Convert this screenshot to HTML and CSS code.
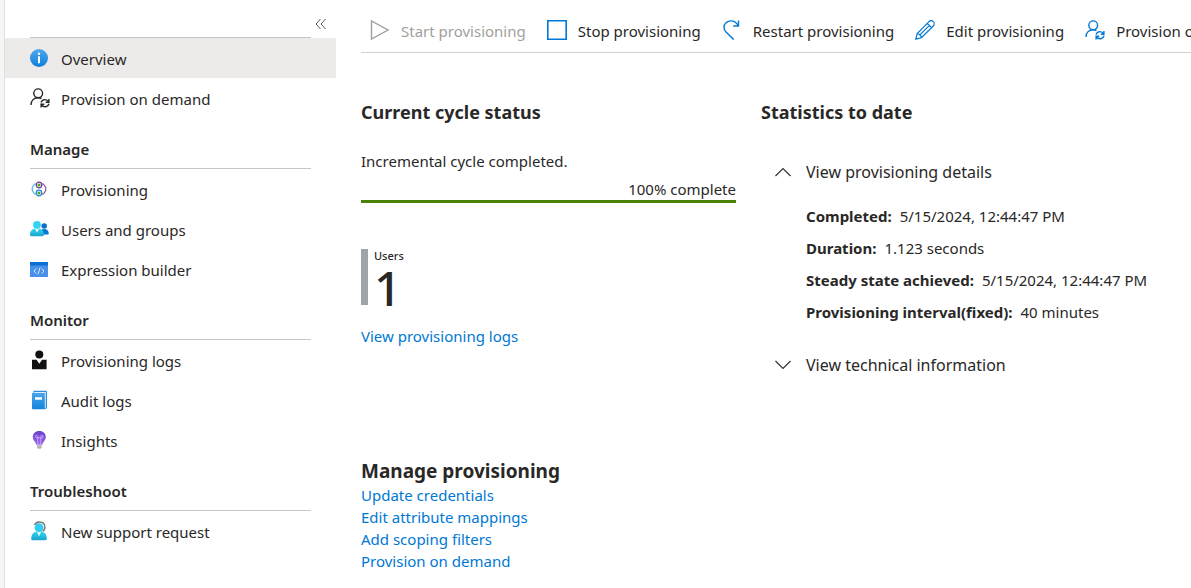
FILE: index.html
```html
<!DOCTYPE html>
<html lang="en">
<head>
    <meta charset="UTF-8">
    <meta name="viewport" content="width=device-width, initial-scale=1.0">
    <title>Provisioning - Overview</title>
    <link rel="stylesheet" href="styles.css">
</head>
<body>
    <!-- shared icon: person with sync arrows -->
    <svg class="defs" aria-hidden="true">
        <symbol id="person-sync" viewBox="0 0 20 20">
            <g fill="none" stroke="currentColor" stroke-width="1.4">
                <circle cx="8.2" cy="5.3" r="4.4"/>
                <path d="M1 17c0-4.600 3-7.300 7.200-7.300 1.300 0 2.300.3 3.300.8"/>
                <path d="M11 14.600c.7-2 2.200-3 4-3 1.500 0 2.800.8 3.500 2.200M18.900 11v3.200h-3.200M19 15.800c-.7 2-2.200 3-4 3-1.500 0-2.800-.8-3.500-2.200M11.100 19.500v-3.200h3.200"/>
            </g>
        </symbol>
    </svg>
    <div class="page">
        <nav class="sidebar">
            <div class="sidebar-top">
                <div class="search-line"></div>
                <button type="button" class="collapse" aria-label="Collapse menu">
                    <svg width="12" height="12" viewBox="0 0 12 12"><path d="M5.500 1 1 6l4.500 5M10.500 1 6 6l4.500 5" fill="none" stroke="#605e5c"/></svg>
                </button>
            </div>
            <a href="#" class="item active">
                <svg width="18" height="18" viewBox="0 0 18 18">
                    <defs><linearGradient id="gInfo" x2="0" y2="1"><stop offset="0" stop-color="#4fa8f0"/><stop offset="1" stop-color="#0f7fd8"/></linearGradient></defs>
                    <circle cx="9" cy="9" r="9" fill="url(#gInfo)"/>
                    <circle cx="9" cy="4.800" r="1.200" fill="#fff"/><path d="M8 7.200h2v7H8z" fill="#fff"/>
                </svg>
                Overview
            </a>
            <a href="#" class="item">
                <svg width="20" height="20"><use href="#person-sync"/></svg>
                Provision on demand
            </a>

            <h2 class="group">Manage</h2>
            <a href="#" class="item">
                <svg width="18" height="18" viewBox="0 0 18 18">
                    <g fill="none" stroke-width="1.200">
                        <path d="M6 4H4.600L2.300 7.500v3L4.500 14H6" stroke="#50b7e8"/>
                        <path d="M12 4h1.300l2.400 3.500v3L13.500 14H12" stroke="#8a4f9e"/>
                        <circle cx="9" cy="5" r="2.800" stroke="#6b3a94"/>
                        <circle cx="9" cy="13" r="2.800" stroke="#1b86d8"/>
                    </g>
                    <circle cx="9" cy="5" r="1.600" fill="#5ea11a"/><circle cx="9" cy="13" r="1.600" fill="#5ea11a"/>
                </svg>
                Provisioning
            </a>
            <a href="#" class="item">
                <svg width="20" height="18" viewBox="0 0 20 18">
                    <defs><linearGradient id="gUser" x2="0" y2="1"><stop offset="0" stop-color="#32d4f5"/><stop offset="1" stop-color="#1aa5cb"/></linearGradient></defs>
                    <circle cx="14.200" cy="6" r="2.800" fill="#0f6fc9"/><path d="M10 14.500c0-3.500 1.500-5.500 4.200-5.500s4.600 2 4.600 4.600q0 .9-.9.900z" fill="#0078d4"/>
                    <path d="M0 15c0-4 2.300-6.800 7-6.800s6.900 2.800 6.900 6.800q0 1.300-1.300 1.300H1.300Q0 16.300 0 15z" fill="url(#gUser)"/>
                    <path d="m4.800 8.500 2.200 4.200 2.200-4.200z" fill="#e6f9fd"/>
                    <circle cx="7" cy="4.800" r="3.900" fill="#35d3f2"/>
                </svg>
                Users and groups
            </a>
            <a href="#" class="item">
                <svg width="18" height="18" viewBox="0 0 18 18">
                    <path d="M0 5h18v12H0z" fill="#4a90ea"/><path d="M0 2h18v3.500H0z" fill="#0b6fd0"/>
                    <path d="M6.300 8.500 4 11l2.300 2.500M11.700 8.500 14 11l-2.300 2.500M10 7.700 8 14.300" fill="none" stroke="#d5e8ff"/>
                </svg>
                Expression builder
            </a>

            <h2 class="group">Monitor</h2>
            <a href="#" class="item">
                <svg width="18" height="20" viewBox="0 0 18 20">
                    <circle cx="9.300" cy="4.500" r="4" fill="#111"/>
                    <path d="M2 9.800h4.500l2.800 4 2.800-4h4.500v9.500H2z" fill="#111"/>
                </svg>
                Provisioning logs
            </a>
            <a href="#" class="item">
                <svg width="18" height="20" viewBox="0 0 18 20">
                    <defs><linearGradient id="gBook" x2="0" y2="1"><stop offset="0" stop-color="#4ba5ee"/><stop offset="1" stop-color="#1584dc"/></linearGradient></defs>
                    <path d="M3.500.8H16q1 0 1 1v16q0 1-1 1H3.500z" fill="#2b8bdd"/><path d="M4 2h11.800v16H14z" fill="#e3f0fa"/>
                    <path d="M2 2.500Q2 3 3 3h11.800v16.200H3q-1 0-1-1z" fill="url(#gBook)"/>
                    <path d="M5 7.200h7v2.500H5z" fill="#fff"/>
                </svg>
                Audit logs
            </a>
            <a href="#" class="item">
                <svg width="18" height="20" viewBox="0 0 18 20">
                    <defs><linearGradient id="gBulb" x2="0" y2="1"><stop offset="0" stop-color="#6741c9"/><stop offset="1" stop-color="#9a66ef"/></linearGradient></defs>
                    <path d="M9.300 1c3.900 0 6.500 2.600 6.500 6 0 3.700-3 4.600-3.400 7.800H6.200C5.800 11.600 2.800 10.700 2.800 7c0-3.400 2.600-6 6.500-6z" fill="url(#gBulb)"/>
                    <path d="M7.800 14.500V7.800H6.500A1.200 1.200 0 1 1 7.800 6.600v1.200h3V6.600A1.200 1.200 0 1 1 12 7.800h-1.200v6.700" fill="none" stroke="#d9b8ff" stroke-width=".8"/>
                    <path d="M6.800 15.300h5v1.800l-1 1.600h-3l-1-1.600z" fill="#b3b3b3"/>
                </svg>
                Insights
            </a>

            <h2 class="group">Troubleshoot</h2>
            <a href="#" class="item">
                <svg width="18" height="20" viewBox="0 0 18 20">
                    <path d="M4.500 4C5.500 1.800 7.300 1 9.300 1c3.500 0 5.600 2.200 5.600 5.300 0 2.200-.8 3.400-2.300 4" fill="none" stroke="#767676" stroke-width="1.400"/>
                    <path d="M1.200 17.800c0-4.500 2.400-7.500 7.800-7.500s7.800 3 7.800 7.500q0 1.500-1.500 1.500H2.700q-1.500 0-1.500-1.500z" fill="url(#gUser)"/>
                    <path d="m6.700 10.500 2.300 5 2.300-5z" fill="#e0f8fd"/>
                    <circle cx="9" cy="6.700" r="4.400" fill="#32cdf0"/>
                </svg>
                New support request
            </a>
        </nav>

        <main class="content">
            <div class="toolbar">
                <button type="button" class="tool" disabled>
                    <svg width="20" height="20" viewBox="0 0 20 20"><path d="M1.500 1v18L18 10z" fill="none" stroke="#a19f9d" stroke-width="1.400"/></svg>
                    Start provisioning
                </button>
                <button type="button" class="tool">
                    <svg width="20" height="20" viewBox="0 0 20 20"><path d="M.8.8h18.400v18.400H.8z" fill="none" stroke="#0078d4" stroke-width="1.600"/></svg>
                    Stop provisioning
                </button>
                <button type="button" class="tool">
                    <svg width="20" height="20" viewBox="0 0 20 20"><path d="M16.500.5V6h-5.300M16.200 5.800C14.500 2.500 11.900.9 9 .9 5 .9 2 3.700 2 7.300c0 2 .8 3.500 2 4.700l7.700 7.600" fill="none" stroke="#0078d4" stroke-width="1.400"/></svg>
                    Restart provisioning
                </button>
                <button type="button" class="tool">
                    <svg width="20" height="20" viewBox="0 0 20 20"><path d="M.8 19.200 2.200 13.600 14 1.700a3 3 0 0 1 4.300 4.300L6.400 17.800zM2.300 13.700c2.200.3 3.600 1.700 4 4M12.300 3.500 16.500 7.700M14.200 5.600 4.400 15.400" fill="none" stroke="#0078d4" stroke-width="1.200"/></svg>
                    Edit provisioning
                </button>
                <button type="button" class="tool">
                    <svg class="blue" width="20" height="20"><use href="#person-sync"/></svg>
                    Provision on demand
                </button>
            </div>

            <div class="columns">
                <section class="cycle">
                    <h2>Current cycle status</h2>
                    <p class="state">Incremental cycle completed.</p>
                    <div class="progress">100% complete</div>
                    <div class="users">
                        <span class="users-label">Users</span>
                        <span class="users-count">1</span>
                    </div>
                    <a href="#">View provisioning logs</a>
                </section>

                <section class="stats">
                    <h2>Statistics to date</h2>
                    <button type="button" class="toggle" aria-expanded="true">
                        <svg width="16" height="10" viewBox="0 0 16 10"><path d="m.5 9 7.500-7.500L15.500 9" fill="none" stroke="#323130" stroke-width="1.200"/></svg>
                        View provisioning details
                    </button>
                    <dl class="details">
                        <div><dt>Completed:</dt><dd>5/15/2024, 12:44:47 PM</dd></div>
                        <div><dt>Duration:</dt><dd>1.123 seconds</dd></div>
                        <div><dt>Steady state achieved:</dt><dd>5/15/2024, 12:44:47 PM</dd></div>
                        <div><dt>Provisioning interval(fixed):</dt><dd>40 minutes</dd></div>
                    </dl>
                    <button type="button" class="toggle" aria-expanded="false">
                        <svg width="16" height="10" viewBox="0 0 16 10"><path d="M.5 1 8 8.500 15.500 1" fill="none" stroke="#323130" stroke-width="1.200"/></svg>
                        View technical information
                    </button>
                </section>
            </div>

            <section class="manage">
                <h2>Manage provisioning</h2>
                <a href="#">Update credentials</a>
                <a href="#">Edit attribute mappings</a>
                <a href="#">Add scoping filters</a>
                <a href="#">Provision on demand</a>
            </section>
        </main>
    </div>
</body>
</html>
```

FILE: styles.css
```css
*{
    box-sizing: border-box;
}
body{
    margin: 0;
    font-family: "Segoe UI", "Noto Sans", "Open Sans", sans-serif;
    font-size: 15px;
    line-height: 22px;
    color: #292827;
    background-color: #fff;
}
h2, p, dl, dd{
    margin: 0;
}
a{
    color: #0078d4;
    text-decoration: none;
}
button{
    padding: 0;
    border: 0;
    background: none;
    font: inherit;
    color: inherit;
    cursor: pointer;
}
svg{
    flex: none;
}
.defs{
    display: none;
}
.page{
    display: flex;
    min-height: 100vh;
    border-left: 4px solid #f5f5f5;
    overflow: hidden;
}

/* left menu */
.sidebar{
    flex: none;
    width: 332px;
    border-left: 1px solid #e1e1e1;
}
.sidebar-top{
    display: flex;
    height: 38px;
    padding-left: 25px;
}
.search-line{
    width: 281px;
    border-bottom: 1px solid #c8c6c4;
}
.collapse{
    display: flex;
    width: 20px;
    height: 38px;
    padding-top: 10px;
    align-items: center;
    justify-content: center;
}
.item{
    display: flex;
    align-items: center;
    height: 40px;
    padding: 2px 0 0 56px;
    color: #292827;
}
.item svg{
    width: 20px;
    margin: 0 11px 2px -31px;
}
.item svg:not([width="20"]){
    width: 18px;
    margin-right: 13px;
}
.active{
    background-color: #edebe9;
}
h2{
    font-size: 18px;
    line-height: 26px;
    font-weight: 700;
}
.group{
    height: 51px;
    margin: 0 25px;
    padding-top: 18px;
    border-bottom: 1px solid #c8c6c4;
    font-size: 15px;
    font-weight: 600;
}

/* right side */
.content{
    flex: 1;
    min-width: 0;
    padding-left: 25px;
}
.toolbar{
    display: flex;
    gap: 21px;
    height: 53px;
    padding: 10px 0 0 9px;
    border-bottom: 1px solid #d2d0ce;
    overflow: hidden;
}
.tool{
    display: flex;
    flex: none;
    align-items: center;
    gap: 11px;
    height: 42px;
    white-space: nowrap;
}
.tool svg{
    margin-bottom: 2px;
}
.tool:disabled{
    color: #a19f9d;
}
.blue{
    color: #0078d4;
}
.columns{
    display: flex;
    gap: 25px;
    padding-top: 46px;
}
.cycle{
    width: 375px;
}
.state{
    padding-top: 25px;
}
.progress{
    height: 31px;
    padding-top: 6px;
    margin-bottom: 46px;
    border-bottom: 3px solid #498205;
    text-align: right;
}
.users{
    display: flex;
    flex-direction: column;
    height: 56px;
    margin-bottom: 20px;
    padding-left: 6px;
    border-left: 7px solid #a0a4a6;
}
.users-label{
    font-size: 11px;
    line-height: 14px;
    font-weight: 500;
}
.users-count{
    font-size: 48px;
    line-height: 50px;
    font-weight: 500;
}
.stats{
    flex: 1;
}
.toggle{
    display: flex;
    align-items: center;
    gap: 15px;
    padding-left: 14px;
    font-size: 16px;
    line-height: 26px;
}
.stats h2{
    margin-bottom: 34px;
}
.details{
    padding: 15px 0 24px 45px;
}
.details div{
    display: flex;
    gap: 8px;
    line-height: 32px;
}
.details dt{
    font-weight: 700;
}
.manage{
    display: flex;
    flex-direction: column;
    align-items: flex-start;
    padding-top: 80px;
}
.manage h2{
    font-size: 19px;
}
```
